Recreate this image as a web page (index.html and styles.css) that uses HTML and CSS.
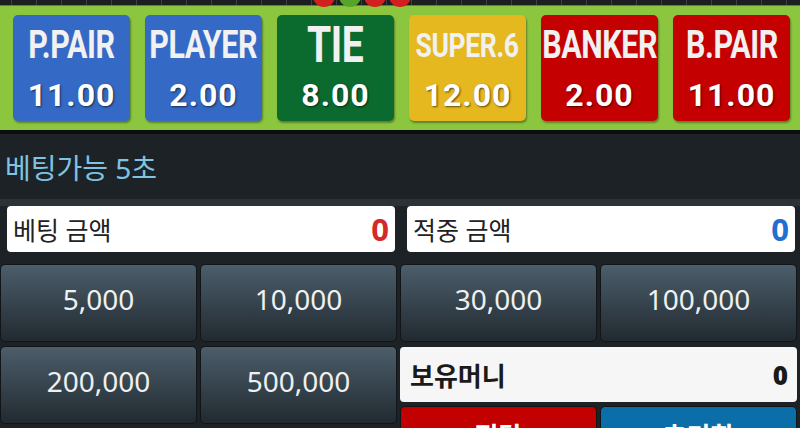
FILE: index.html
```html
<!DOCTYPE html>
<html lang="ko">
<head>
  <meta charset="UTF-8">
  <title>베팅</title>
  <meta name="viewport" content="width=device-width, initial-scale=1">
  <link rel="stylesheet" href="styles.css">
</head>
<body>

  <div class="strip">
    <span class="dot red" style="left: 313px;"></span>
    <span class="dot green" style="left: 339px;"></span>
    <span class="dot red" style="left: 364px;"></span>
    <span class="dot red" style="left: 389px;"></span>
  </div>

  <div class="board">
    <div class="bet blue"><div class="name"><span>P.PAIR</span></div><div class="odds">11.00</div></div>
    <div class="bet blue"><div class="name"><span>PLAYER</span></div><div class="odds">2.00</div></div>
    <div class="bet tie"><div class="name big"><span>TIE</span></div><div class="odds">8.00</div></div>
    <div class="bet yellow"><div class="name small"><span>SUPER.6</span></div><div class="odds">12.00</div></div>
    <div class="bet red"><div class="name"><span>BANKER</span></div><div class="odds">2.00</div></div>
    <div class="bet red"><div class="name"><span>B.PAIR</span></div><div class="odds">11.00</div></div>
  </div>

  <div class="status">베팅가능 5초</div>

  <div class="panel">
    <div class="amounts">
      <div class="amount"><span>베팅 금액</span><b class="num-red">0</b></div>
      <div class="amount"><span>적중 금액</span><b class="num-blue">0</b></div>
    </div>

    <div class="chips">
      <button class="chip">5,000</button>
      <button class="chip">10,000</button>
      <button class="chip">30,000</button>
      <button class="chip">100,000</button>
      <button class="chip">200,000</button>
      <button class="chip">500,000</button>
      <div class="side">
        <div class="balance"><span>보유머니</span><b>0</b></div>
        <div class="actions">
          <button class="act act-red">전달</button>
          <button class="act act-blue">초기화</button>
        </div>
      </div>
    </div>
  </div>

</body>
</html>
```

FILE: styles.css
```css
body {
  margin: 0;
  width: 800px;
  height: 428px;
  overflow: hidden;
  background-color: #1d2226;
  font-family: "Noto Sans", "Noto Sans CJK KR", sans-serif;
}

.strip {
  position: relative;
  height: 5px;
  border-bottom: 1px solid #6b7074;
  background-color: #1b1f22;
  background-image: repeating-linear-gradient(90deg, transparent 0 11px, #3c4146 11px 12px, transparent 12px 25px);
}

.dot {
  position: absolute;
  top: -15px;
  width: 22px;
  height: 22px;
  border-radius: 50%;
}

.dot.red {
  background: #d21f1f;
}

.dot.green {
  background: #56a42a;
}

.board {
  display: grid;
  grid-template-columns: repeat(6, 117px);
  gap: 15px;
  padding: 9px 11px 9px 13px;
  background: #8cc63f;
  border-bottom: 4px solid #0b0d0e;
}

.bet {
  min-width: 0;
  height: 106px;
  border-radius: 5px;
  box-shadow: 1px 2px 2px rgba(0,0,0,0.35);
  color: #f1f1f1;
  font-family: Roboto, sans-serif;
  font-weight: 700;
  text-align: center;
}

.bet.blue {
  background: #3469c5;
}

.bet.tie {
  background: #0b6b2f;
}

.bet.yellow {
  background: #e6b81f;
}

.bet.red {
  background: #c40001;
}

.name {
  height: 50px;
  margin-top: 5px;
  display: flex;
  align-items: center;
  justify-content: center;
  font-size: 39px;
  line-height: 1;
  letter-spacing: -0.5px;
}

.name span {
  display: inline-block;
  flex-shrink: 0;
  transform: scaleX(0.78);
  white-space: nowrap;
}

.name.big {
  font-size: 50px;
}

.name.small {
  font-size: 34px;
}

.odds {
  margin-top: 9px;
  font-size: 32px;
  line-height: 1;
  letter-spacing: 1px;
  color: #fff;
  text-shadow: 1px 1px 2px rgba(0,0,0,0.6);
}

.status {
  height: 65px;
  padding-left: 5px;
  color: #7fc3e2;
  font-size: 28px;
  line-height: 68px;
}

.panel {
  border-top: 7px solid #2b3339;
}

.amounts {
  display: flex;
  gap: 12px;
  padding: 0 5px 0 7px;
}

.amount {
  flex: 1;
  height: 46px;
  background: #ffffff;
  border-radius: 4px;
  display: flex;
  align-items: center;
  justify-content: space-between;
  padding: 0 6px;
  font-size: 25px;
  color: #222;
}

.amount b {
  font-size: 31px;
  font-family: "Noto Sans", sans-serif;
}

.num-red {
  color: #d42a2a;
}

.num-blue {
  color: #1f70d2;
}

.chips {
  display: grid;
  grid-template-columns: repeat(4, 197px);
  grid-template-rows: 78px 78px;
  gap: 4px 3px;
  margin-top: 12px;
}

.chip {
  border: 1px solid #111518;
  border-radius: 5px;
  background: linear-gradient(#4b5e6b, #222a30);
  color: #eef0f1;
  font-family: "Noto Sans", sans-serif;
  font-size: 28px;
  padding: 0 0 8px;
}

.side {
  grid-column: 3 / 5;
  display: flex;
  flex-direction: column;
  gap: 4px;
  padding-top: 1px;
  min-height: 0;
}

.balance {
  flex-shrink: 0;
  height: 55px;
  background: #f6f6f6;
  border-radius: 4px;
  display: flex;
  align-items: center;
  justify-content: space-between;
  padding: 0 9px 0 10px;
  font-size: 26px;
  font-weight: 700;
  color: #1a1a1a;
}

.actions {
  flex-shrink: 0;
  display: grid;
  grid-template-columns: 197px 197px;
  gap: 3px;
}

.act {
  border: 1px solid #111518;
  border-radius: 5px;
  color: #fff;
  font-family: "Noto Sans CJK KR", sans-serif;
  font-size: 26px;
  font-weight: 700;
  padding: 15px 0 19px;
  text-align: center;
  line-height: 1;
}

.act-red {
  background: #c20000;
}

.act-blue {
  background: #0c6ea9;
}
```
